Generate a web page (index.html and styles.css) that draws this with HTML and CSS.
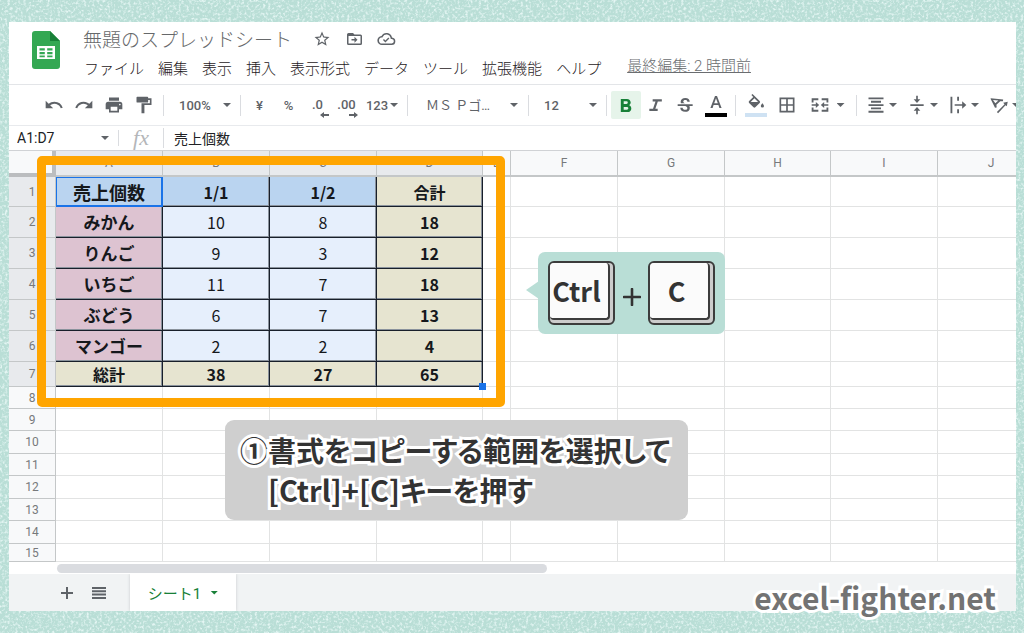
FILE: index.html
```html
<!DOCTYPE html>
<html lang="ja">
<head>
<meta charset="utf-8">
<title>無題のスプレッドシート</title>
<link rel="stylesheet" href="styles.css">
</head>
<body>
<svg class="texture" aria-hidden="true">
  <filter id="grain" x="0" y="0" width="100%" height="100%">
    <feTurbulence type="fractalNoise" baseFrequency="0.38" numOctaves="2" seed="4"/>
    <feColorMatrix values="0 0 0 0 0.78  0 0 0 0 0.92  0 0 0 0 0.9  3 0 0 0 -1.4"/>
  </filter>
  <rect width="100%" height="100%" filter="url(#grain)"/>
</svg>
<main class="app">
  <header class="header">
    <svg class="logo" viewBox="0 0 28 38" aria-hidden="true">
      <path fill="#34a853" d="M3 0h15l10 10v25a3 3 0 0 1-3 3H3a3 3 0 0 1-3-3V3a3 3 0 0 1 3-3z"/>
      <path fill="#188038" d="M18 0l10 10H18z"/>
      <path fill="#fff" fill-rule="evenodd" d="M5 15h18v13H5zM7.500 17.200v2.400h5.300v-2.400zM15.200 17.200v2.400h5.300v-2.400zM7.500 21v2.200h5.300V21zM15.200 21v2.200h5.300V21zM7.500 24.500v1.800h5.300v-1.800zM15.200 24.500v1.800h5.300v-1.800z"/>
    </svg>
    <div class="heading">
      <div class="title-row">
        <h1 class="title">無題のスプレッドシート</h1>
        <button class="title-btn" aria-label="スター"><svg width="18" height="18" viewBox="0 0 24 24"><path d="M22 9.240l-7.190-.62L12 2 9.190 8.630 2 9.240l5.460 4.730L5.820 21 12 17.270 18.180 21l-1.630-7.030zM12 15.400l-3.760 2.270 1-4.280-3.320-2.880 4.380-.38L12 6.100l1.710 4.040 4.380.38-3.320 2.880 1 4.280z"/></svg></button>
        <button class="title-btn" aria-label="移動"><svg width="19" height="18" viewBox="0 0 24 24"><path d="M20 6h-8l-2-2H4a2 2 0 0 0-2 2v12a2 2 0 0 0 2 2h16a2 2 0 0 0 2-2V8a2 2 0 0 0-2-2zm0 12H4V8h16zM12 17l4-4-4-4v3H8v2h4z"/></svg></button>
        <button class="title-btn" aria-label="保存状態"><svg width="19" height="18" viewBox="0 0 24 24"><path d="M19.350 10.040A7.490 7.490 0 0 0 5.350 8.040 5.990 5.990 0 0 0 6 20h13a5 5 0 0 0 .35-9.960zM19 18H6a4 4 0 0 1-.5-7.970l1.070-.11.5-.95a5.490 5.490 0 0 1 10.320 1.460l.3 1.500 1.530.11A3 3 0 0 1 19 18zM10.500 13.900l-1.900-1.900-1.300 1.300 3.200 3.200 5.300-5.300-1.300-1.300z"/></svg></button>
      </div>
      <nav class="menus">
        <button>ファイル</button><button>編集</button><button>表示</button><button>挿入</button><button>表示形式</button><button>データ</button><button>ツール</button><button>拡張機能</button><button>ヘルプ</button>
        <a class="last-edit" href="#history">最終編集: 2 時間前</a>
      </nav>
    </div>
  </header>

  <div class="toolbar" role="toolbar">
    <button class="tool" aria-label="元に戻す"><svg width="20" height="20" viewBox="0 0 24 24"><path d="M12.500 8c-2.650 0-5.050.99-6.900 2.600L2 7v9h9l-3.620-3.620A8 8 0 0 1 20.100 16l2.370-.78A10.500 10.500 0 0 0 12.500 8z"/></svg></button>
    <button class="tool" aria-label="やり直す"><svg width="20" height="20" viewBox="0 0 24 24"><path d="M18.400 10.600A10.500 10.500 0 0 0 1.540 15.220L3.900 16a8 8 0 0 1 12.720-3.620L13 16h9V7z"/></svg></button>
    <button class="tool" aria-label="印刷"><svg width="20" height="20" viewBox="0 0 24 24"><path d="M19 8H5a3 3 0 0 0-3 3v6h4v4h12v-4h4v-6a3 3 0 0 0-3-3zM16 19H8v-5h8zM19 12.500a1 1 0 1 1 0-2 1 1 0 0 1 0 2zM18 3H6v4h12z"/></svg></button>
    <button class="tool" aria-label="書式を貼り付け"><svg width="20" height="20" viewBox="0 0 24 24"><path d="M17 4V3a1 1 0 0 0-1-1H4a1 1 0 0 0-1 1v5a1 1 0 0 0 1 1h12a1 1 0 0 0 1-1V6h2v4H9v12h3.500V12H21V4z"/></svg></button>
    <span class="sep"></span>
    <label class="pick pick-zoom"><select aria-label="ズーム"><option>100%</option></select><i class="caret"></i></label>
    <span class="sep"></span>
    <button class="tool num">¥</button>
    <button class="tool num">%</button>
    <button class="tool num decimal"><span>.0</span><svg width="9" height="6" viewBox="0 0 9 6"><path d="M4 0v2h5v2H4v2L0 3z"/></svg></button>
    <button class="tool num decimal"><span>.00</span><svg width="9" height="6" viewBox="0 0 9 6"><path d="M5 0v2H0v2h5v2l4-3z"/></svg></button>
    <button class="tool formats">123<i class="caret"></i></button>
    <span class="sep"></span>
    <label class="pick pick-font"><select aria-label="フォント"><option>ＭＳ Ｐゴ…</option></select><i class="caret"></i></label>
    <span class="sep"></span>
    <label class="pick pick-size"><select aria-label="フォントサイズ"><option>12</option></select><i class="caret"></i></label>
    <span class="sep"></span>
    <button class="tool active" aria-label="太字" aria-pressed="true"><svg width="21" height="21" viewBox="0 0 24 24"><path d="M15.100 11.600c1-.7 1.700-1.800 1.700-2.900C16.800 6.200 15 4.500 12.500 4.500H5.500v15h7.900c2.400 0 4.100-1.900 4.100-4.200 0-1.700-.9-3-2.400-3.700zM8.800 7.200h3.200a1.500 1.500 0 0 1 0 3H8.800zm3.700 9.600H8.800v-3.200h3.700a1.600 1.600 0 0 1 0 3.200z"/></svg></button>
    <button class="tool" aria-label="斜体"><svg width="20" height="20" viewBox="0 0 24 24"><path d="M8 5v2.800h3.400l-3 8.600H4v2.800h10v-2.800h-2.800l3-8.600H19V5z"/></svg></button>
    <button class="tool" aria-label="取り消し線"><svg width="20" height="20" viewBox="0 0 24 24"><path d="M6 10a4 4 0 0 1-.4-1.900C5.600 5.100 8 3.500 11.200 3.500c3.300 0 5.300 1.900 5.300 4.500h-2.900c0-1.300-.9-2.100-2.400-2.100s-2.500.7-2.500 1.900c0 1 .7 1.600 2.200 2.200zM20 11v2.300h-4c.4.700.6 1.400.6 2.200 0 3.100-2.400 4.700-5.600 4.700-3.400 0-5.900-1.800-5.900-4.900H8c0 1.700 1.300 2.500 3 2.500 1.600 0 2.600-.8 2.600-2 0-1.100-.6-1.900-2.400-2.500H2V11z"/></svg></button>
    <button class="tool swatch" aria-label="文字の色"><svg width="18" height="16" viewBox="0 0 18 16"><path d="M8 2h2l4.600 12h-2.200l-1-3H6.600l-1 3H3.400zM7.200 9.200h3.600L9 4.200z"/></svg><i class="ink ink-black"></i></button>
    <span class="sep"></span>
    <button class="tool swatch wide" aria-label="塗りつぶしの色"><svg width="20" height="16" viewBox="0 0 24 20"><path d="M16.600 8.900L7.600 0 6.200 1.400l2.400 2.400-5.200 5.100a1.500 1.500 0 0 0 0 2.200l5.500 5.500a1.500 1.500 0 0 0 2.200 0l5.500-5.500a1.500 1.500 0 0 0 0-2.200zM5.400 10L10 5.300l4.600 4.700zM20 11.500s-2 2.200-2 3.500a2 2 0 0 0 4 0c0-1.300-2-3.500-2-3.500z"/></svg><i class="ink ink-blue"></i></button>
    <button class="tool wide" aria-label="枠線"><svg width="20" height="20" viewBox="0 0 24 24"><path d="M3 3v18h18V3zm8 16H5v-6h6zm0-8H5V5h6zm8 8h-6v-6h6zm0-8h-6V5h6z"/></svg></button>
    <button class="tool merge" aria-label="セルを結合"><svg width="20" height="20" viewBox="0 0 24 24"><path d="M2 4h8v2.200H4.200V9H2zm12 0h8v5h-2.200V6.200H14zM2 15h2.200v2.800H10V20H2zm17.800 0H22v5h-8v-2.200h5.800zM2 11h5V8.500l4 3.500-4 3.500V13H2zm20 0h-5V8.500L13 12l4 3.500V13h5z"/></svg><i class="caret"></i></button>
    <span class="sep"></span>
    <button class="tool drop" aria-label="水平方向の配置"><svg width="20" height="20" viewBox="0 0 24 24"><path d="M3 3h18v2.200H3zM6 7h12v2.200H6zM3 11h18v2.200H3zM6 15h12v2.200H6zM3 19h18v2.200H3z"/></svg><i class="caret"></i></button>
    <button class="tool drop" aria-label="垂直方向の配置"><svg width="20" height="20" viewBox="0 0 24 24"><path d="M11 1h2v4h3l-4 4.500L8 5h3zM4 11h16v2.200H4zM12 14.500l4 4.500h-3v4h-2v-4H8z"/></svg><i class="caret"></i></button>
    <button class="tool drop" aria-label="折り返し"><svg width="20" height="20" viewBox="0 0 24 24"><path d="M3 2h2.200v20H3zM11 2h2.200v5H11zM11 17h2.200v5H11zM8 11h9V7.500l5 4.500-5 4.500V13H8z"/></svg><i class="caret"></i></button>
    <button class="tool drop" aria-label="回転"><svg width="20" height="20" viewBox="0 0 24 24"><path fill-rule="evenodd" d="M2 4l15 1.500-.3 2-3.200-.1-4.600 4.300.3 3.300-2 .4L2 4.700zM4.800 5.900l2.800 4 3.600-3.400zM9.500 20.500L18.700 11 17 9.200l5.500-1.200-1.200 5.500-1.500-1.200-8.900 9.500z"/></svg><i class="caret"></i></button>
  </div>

  <div class="formula-bar">
    <label class="name-box"><input aria-label="名前ボックス" value="A1:D7"><i class="caret"></i></label>
    <span class="fx">fx</span>
    <input class="formula" aria-label="数式" value="売上個数">
  </div>

  <section class="sheet">
    <table class="grid">
      <colgroup><col class="c-num"><col class="c-w"><col class="c-w"><col class="c-w"><col class="c-n"><col class="c-e"><col class="c-w"><col class="c-w"><col class="c-n"><col class="c-w"><col class="c-w"></colgroup>
      <thead><tr><th class="corner"></th><th class="sel">A</th><th class="sel">B</th><th class="sel">C</th><th class="sel">D</th><th>E</th><th>F</th><th>G</th><th>H</th><th>I</th><th>J</th></tr></thead>
      <tbody>
        <tr class="tall first"><th class="sel">1</th><td class="d head cursor">売上個数</td><td class="d head">1/1</td><td class="d head">1/2</td><td class="d sum">合計</td><td></td><td></td><td></td><td></td><td></td><td></td></tr>
        <tr class="tall"><th class="sel">2</th><td class="d item">みかん</td><td class="d">10</td><td class="d">8</td><td class="d sum">18</td><td></td><td></td><td></td><td></td><td></td><td></td></tr>
        <tr class="tall"><th class="sel">3</th><td class="d item">りんご</td><td class="d">9</td><td class="d">3</td><td class="d sum">12</td><td></td><td></td><td></td><td></td><td></td><td></td></tr>
        <tr class="tall"><th class="sel">4</th><td class="d item">いちご</td><td class="d">11</td><td class="d">7</td><td class="d sum">18</td><td></td><td></td><td></td><td></td><td></td><td></td></tr>
        <tr class="tall"><th class="sel">5</th><td class="d item">ぶどう</td><td class="d">6</td><td class="d">7</td><td class="d sum">13</td><td></td><td></td><td></td><td></td><td></td><td></td></tr>
        <tr class="tall"><th class="sel">6</th><td class="d item">マンゴー</td><td class="d">2</td><td class="d">2</td><td class="d sum">4</td><td></td><td></td><td></td><td></td><td></td><td></td></tr>
        <tr class="total"><th class="sel">7</th><td class="d sum">総計</td><td class="d sum">38</td><td class="d sum">27</td><td class="d sum last">65</td><td></td><td></td><td></td><td></td><td></td><td></td></tr>
        <tr><th>8</th><td></td><td></td><td></td><td></td><td></td><td></td><td></td><td></td><td></td><td></td></tr>
        <tr><th>9</th><td></td><td></td><td></td><td></td><td></td><td></td><td></td><td></td><td></td><td></td></tr>
        <tr><th>10</th><td></td><td></td><td></td><td></td><td></td><td></td><td></td><td></td><td></td><td></td></tr>
        <tr><th>11</th><td></td><td></td><td></td><td></td><td></td><td></td><td></td><td></td><td></td><td></td></tr>
        <tr><th>12</th><td></td><td></td><td></td><td></td><td></td><td></td><td></td><td></td><td></td><td></td></tr>
        <tr><th>13</th><td></td><td></td><td></td><td></td><td></td><td></td><td></td><td></td><td></td><td></td></tr>
        <tr><th>14</th><td></td><td></td><td></td><td></td><td></td><td></td><td></td><td></td><td></td><td></td></tr>
        <tr class="short"><th>15</th><td></td><td></td><td></td><td></td><td></td><td></td><td></td><td></td><td></td><td></td></tr>
      </tbody>
    </table>
    <div class="frame"></div>
    <div class="keys">
      <kbd class="key"><span>Ctrl</span></kbd>
      <svg width="18" height="18" viewBox="0 0 18 18" aria-label="+"><path d="M9 1v16M1 9h16" stroke="#333" stroke-width="2.600" stroke-linecap="round"/></svg>
      <kbd class="key"><span>C</span></kbd>
    </div>
    <p class="caption"><span>①</span><span>書式をコピーする範囲を選択して<br><span class="combo">[Ctrl]+[C]</span>キーを押す</span></p>
  </section>
  <div class="scroll"><div class="thumb"></div></div>

  <footer class="tabs">
    <button class="foot-btn" aria-label="シートを追加"><svg width="12" height="12" viewBox="0 0 12 12"><path d="M5 0h2v5h5v2H7v5H5V7H0V5h5z"/></svg></button>
    <button class="foot-btn" aria-label="すべてのシート"><svg width="14" height="12" viewBox="0 0 14 12"><path d="M0 0h14v2H0zM0 3.300h14v2H0zM0 6.600h14v2H0zM0 10h14v2H0z"/></svg></button>
    <button class="tab">シート1<i class="caret"></i></button>
  </footer>
  <div class="credit">excel-fighter.net</div>
</main>
</body>
</html>
```

FILE: styles.css
```css
* { box-sizing: border-box; }
body {
  margin: 0;
  min-height: 100vh;
  padding: 22px 8px 22px 9px;
  background: #b9ded6;
  font-family: Roboto, "Noto Sans CJK JP", sans-serif;
  color: #3c4043;
}
button, input, select {
  margin: 0;
  padding: 0;
  border: 0;
  background: none;
  font: inherit;
  color: inherit;
  outline: none;
}
svg { display: block; fill: currentColor; }
.texture { position: absolute; inset: 0; width: 100%; height: 100%; }
.app { position: relative; background: #fff; }

.header { display: flex; height: 63px; padding: 9px 0 0 23px; border-bottom: 1px solid #e3e5e8; }
.logo { width: 28px; height: 38px; margin-right: 24px; }
.title-row { display: flex; align-items: center; height: 15px; }
.title {
  margin: 0 14px 0 -1px;
  font: 300 19px/24px "Noto Sans CJK JP", sans-serif;
  color: #66686a;
}
.title-btn { width: 32px; height: 20px; color: #5f6368; display: grid; place-items: center; }
.menus { display: flex; gap: 14px; margin-top: 11px; font-size: 15px; line-height: 22px; white-space: nowrap; }
.menus { font-family: "Noto Sans CJK JP", sans-serif; }
.menus button { color: #1f2123; font-weight: 300; }
.last-edit { margin: -1px 0 0 12px; color: #6a6d70; font-family: Roboto, "Noto Sans CJK JP", sans-serif; font-weight: 300; line-height: 20px; }

.toolbar {
  display: flex;
  align-items: center;
  height: 41px;
  padding-left: 30px;
  border-bottom: 1px solid #e8eaed;
  overflow: hidden;
  color: #5f6368;
  font-size: 13px;
  font-weight: 500;
}
.toolbar > * { flex: none; }
.sep { width: 1px; height: 21px; margin: 0 4px; background: #dadce0; }
.tool { width: 30px; height: 28px; display: flex; align-items: center; justify-content: center; }
.tool.num { width: 29px; }
.tool.wide { width: 31px; }
.tool.formats { width: 42px; gap: 2px; }
.tool.merge { width: 50px; gap: 7px; }
.tool.drop { width: 41px; gap: 3px; }
.tool.active { background: #e6f4ea; color: #188038; border-radius: 2px; }
.decimal { flex-direction: column; padding-top: 6px; line-height: 14px; }
.decimal svg { align-self: flex-end; margin-right: 3px; }
.swatch { flex-direction: column; gap: 3px; }
.ink { width: 22px; height: 4px; }
.ink-black { background: #000; }
.ink-blue { background: #cfe2f3; }
.caret { flex: none; width: 8px; height: 4px; background: currentColor; clip-path: polygon(0 0, 100% 0, 50% 100%); }
.pick { display: flex; align-items: center; justify-content: space-between; padding: 0 5px 0 11px; }
.pick select { appearance: none; flex: 1; min-width: 0; }
.pick-zoom { width: 68px; }
.pick-font { width: 112px; padding-left: 14px; padding-right: 6px; }
.pick-font select { font-weight: 400; }
.pick-size { width: 69px; }

.formula-bar { display: flex; align-items: center; height: 24px; font-size: 14px; color: #202124; }
.name-box { display: flex; align-items: center; width: 110px; padding: 0 9px 0 8px; border-right: 1px solid #dadce0; color: #5f6368; }
.name-box input { flex: 1; min-width: 0; color: #202124; }
.fx { width: 45px; border-right: 1px solid #dadce0; text-align: center; font: italic 22px/20px "Liberation Serif", serif; color: #b4b6b9; }
.formula { flex: 1; padding-left: 10px; font-family: "Noto Sans CJK JP", sans-serif; line-height: 20px; }

.sheet { position: relative; overflow: hidden; border-top: 1px solid #d0d2d5; }
.grid { width: 1035px; table-layout: fixed; border-collapse: separate; border-spacing: 0; }
.c-num { width: 47px; }
.c-w { width: 107px; }
.c-n { width: 106px; }
.c-e { width: 28px; }
.grid th {
  padding: 0;
  background: #f8f9fa;
  border-right: 1px solid #c4c7c8;
  border-bottom: 1px solid #c4c7c8;
  font: 400 12px/14px Roboto, sans-serif;
  color: #77797c;
}
.grid th.sel { background: #e8eaed; }
.grid thead th { height: 26px; border-bottom-width: 2px; }
.grid thead .corner { border-right: 4px solid #bbbdbf; border-bottom: 4px solid #bbbdbf; }
.grid tr { height: 22px; }
.grid tbody tr:nth-child(even) { height: 23px; }
.grid tbody tr.tall { height: 31px; }
.grid tbody tr.first { height: 30px; }
.grid tbody tr.total { height: 25px; }
.grid tbody tr:nth-child(8) { height: 22px; }
.grid tr.short { height: 18px; }
.grid td { padding: 0; border-right: 1px solid #e2e3e3; border-bottom: 1px solid #e2e3e3; }
.grid td.d {
  background: #e6effc;
  border-color: #181f2a;
  box-shadow: inset -1px -1px #8a929c;
  text-align: center;
  font: 400 16px/22px "Noto Sans CJK JP", sans-serif;
  color: #15181c;
}
.grid td.head, .grid td.sum, .grid td.item { font-weight: 700; }
.grid td.head { background: #bad4f0; }
.grid td.item { background: #ddc3d1; font-size: 17px; }
.grid td.sum { background: #e6e4d0; }
.grid td.cursor { font-size: 18px; border-color: #1a73e8; box-shadow: inset 0 0 0 1px #1a73e8; }
.grid td.last { position: relative; }
.grid td.last::after { content: ""; position: absolute; right: -4px; bottom: -4px; width: 7px; height: 7px; background: #1a73e8; }

.frame { position: absolute; left: 28px; top: 5px; width: 468px; height: 251px; border: 9px solid #ffa500; border-radius: 5px; }
.keys {
  position: absolute;
  left: 529px;
  top: 101px;
  width: 187px;
  height: 82px;
  display: flex;
  align-items: center;
  justify-content: space-between;
  padding: 0 10px;
  background: #b9ded6;
  border-radius: 7px;
}
.keys::before { content: ""; position: absolute; left: -12px; top: 29px; width: 13px; height: 18px; background: #b9ded6; clip-path: polygon(0 50%, 100% 0, 100% 100%); }
.keys svg { margin-top: 8px; }
.key { width: 67px; height: 64px; padding: 0 3px 3px 0; background: #ccc; border: 2px solid #3c3c3c; border-radius: 6px; }
.key span {
  display: block;
  height: 57px;
  padding-right: 5px;
  background: #fbfbfb;
  border: solid #3c3c3c;
  border-width: 0 2px 2px 0;
  border-radius: 4px;
  text-align: center;
  font: 700 27px/56px "Noto Sans CJK JP", sans-serif;
  color: #333;
}
.caption {
  position: absolute;
  left: 216px;
  top: 269px;
  width: 463px;
  height: 100px;
  margin: 0;
  padding: 10px 15px;
  display: flex;
  background: #cfcfcf;
  border-radius: 9px;
  white-space: nowrap;
  font: 700 28px/40px "Noto Sans CJK JP", sans-serif;
  font-feature-settings: "palt";
  color: #333;
  -webkit-text-stroke: 6px #fff;
  paint-order: stroke fill;
}
.combo { font-size: 29px; line-height: 1; }

.scroll { height: 12px; padding: 2px 0 1px 48px; }
.thumb { width: 490px; height: 9px; border-radius: 5px; background: #dadce0; }
.tabs { display: flex; align-items: center; height: 37px; padding-left: 42px; background: #f1f3f4; color: #5f6368; }
.foot-btn { width: 32px; height: 30px; display: grid; place-items: center; }
.tab {
  display: flex;
  align-items: center;
  justify-content: center;
  gap: 9px;
  width: 106px;
  height: 37px;
  margin-left: 15px;
  background: #fff;
  box-shadow: 0 0 3px #c8cacd;
  clip-path: inset(0 -3px);
  color: #188038;
  font-size: 15px;
  font-weight: 400;
}
.credit {
  position: absolute;
  right: 20px;
  bottom: -6px;
  font: 700 30px/40px "Noto Sans CJK JP", sans-serif;
  color: #737373;
  -webkit-text-stroke: 6px #fff;
  paint-order: stroke fill;
}
```
